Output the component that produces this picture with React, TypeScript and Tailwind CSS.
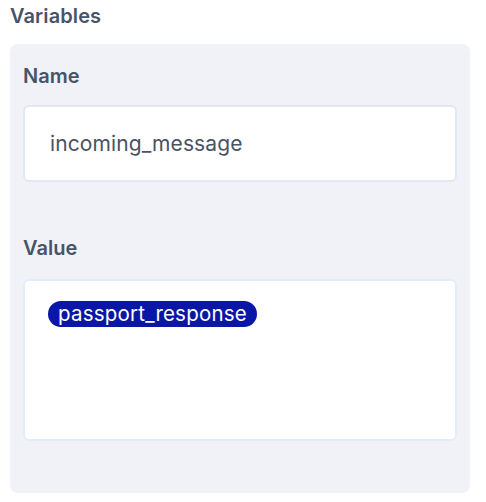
import React from 'react';

export default function App() {
  return (
    <div className="w-[486px] h-[502px] bg-white px-[10px] pt-[2px]" style={{ fontFamily: 'Inter, "Noto Sans", sans-serif' }}>
      <h2 className="text-[20px] leading-[28px] font-semibold text-[#475467] tracking-[0.005em]">Variables</h2>

      <div className="mt-[14px] w-[460px] h-[449px] rounded-[8px] bg-[#f1f2f7] px-[13px] pt-[18px]">
        <label className="block text-[20px] leading-[28px] font-semibold text-[#475467]">Name</label>
        <div className="mt-[15px] h-[77px] rounded-[6px] border-2 border-[#e1e8f4] bg-white flex items-center px-[25px]">
          <span className="text-[21px] text-[#4b5262] tracking-[0.005em]">incoming_message</span>
        </div>

        <label className="block mt-[52px] text-[20px] leading-[28px] font-semibold text-[#475467]">Value</label>
        <div className="mt-[17px] h-[162px] rounded-[6px] border-2 border-[#e4ecf9] bg-white px-[23px] pt-[20px]">
          <span className="inline-flex items-center h-[26px] rounded-full bg-[#0a17a6] px-[10px] text-[20.5px] text-white tracking-[0.01em]">
            passport_response
          </span>
        </div>
      </div>
    </div>
  );
}
